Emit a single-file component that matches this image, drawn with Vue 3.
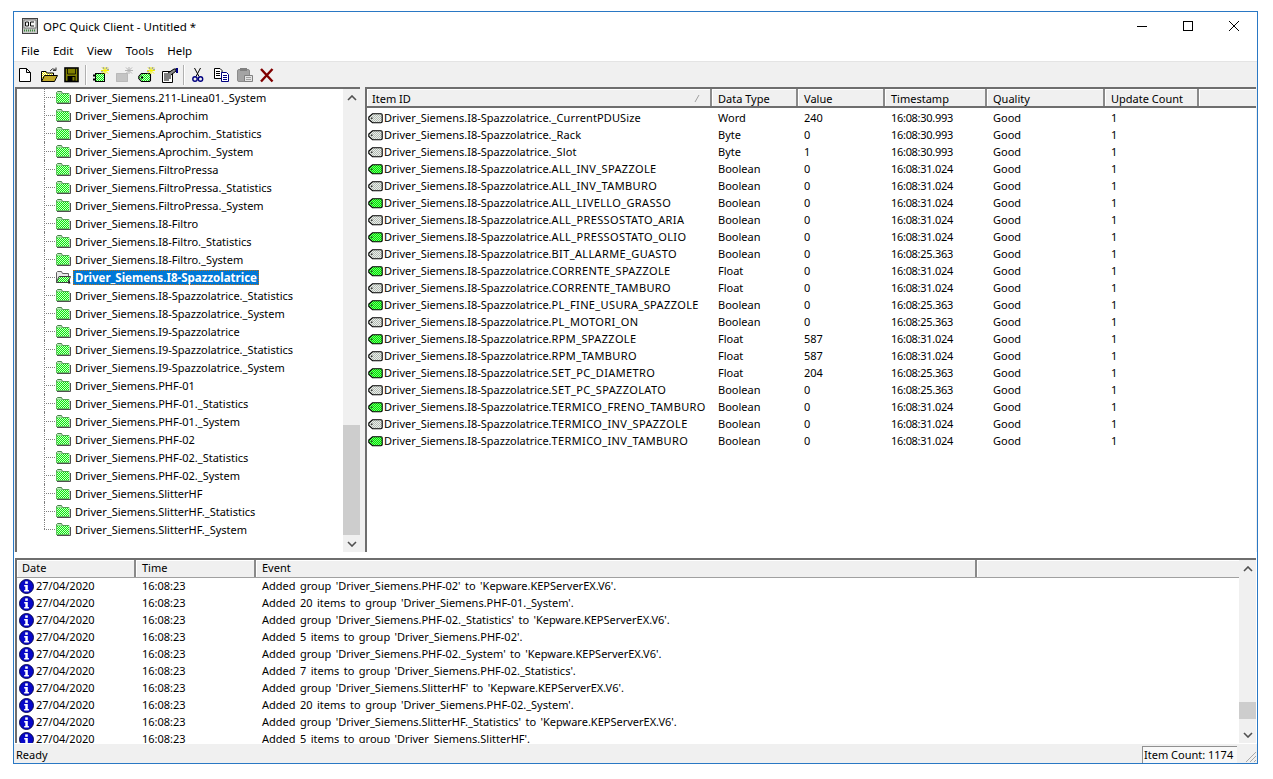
<template>
  <div class="page">
    <svg class="defs" width="0" height="0">
      <defs>
        <pattern id="dith" width="2" height="2" patternUnits="userSpaceOnUse">
          <rect width="2" height="2" fill="#10e810" />
          <rect width="1" height="1" fill="#c8ffc8" />
          <rect x="1" y="1" width="1" height="1" fill="#c8ffc8" />
        </pattern>
        <pattern id="dithtag" width="2" height="2" patternUnits="userSpaceOnUse">
          <rect width="2" height="2" fill="#00e800" />
          <rect width="1" height="1" fill="#70f870" />
          <rect x="1" y="1" width="1" height="1" fill="#70f870" />
        </pattern>
        <pattern id="dithgray" width="2" height="2" patternUnits="userSpaceOnUse">
          <rect width="2" height="2" fill="#b0bcb0" />
          <rect width="1" height="1" fill="#ececec" />
          <rect x="1" y="1" width="1" height="1" fill="#ececec" />
        </pattern>
        <pattern id="dithyellow" width="2" height="2" patternUnits="userSpaceOnUse">
          <rect width="2" height="2" fill="#e8e000" />
          <rect width="1" height="1" fill="#fff" />
          <rect x="1" y="1" width="1" height="1" fill="#fff" />
        </pattern>
        <symbol id="folder" viewBox="0 0 16 16">
          <path d="M1.5 6 V3.5 L2.5 2.5 H6.5 L7.5 4.5 H14" fill="#b8f0b8" stroke="#4a804a" />
          <rect x="1" y="4.5" width="13.5" height="9.5" fill="#60c060" />
          <rect x="2" y="5" width="12" height="8" fill="url(#dith)" />
          <path d="M15.5 6 V14.5 H2" fill="none" stroke="#505050" />
        </symbol>
        <symbol id="folderopen" viewBox="0 0 16 16">
          <path d="M1.5 13.5 V3.5 L2.5 2.5 H6.5 L7.5 4.5 H13.5 V7" fill="#e8e8e8" stroke="#606060" />
          <path d="M1.5 13.5 L4 7.5 H15.5 L13 13.5 Z" fill="url(#dith)" stroke="#404040" />
          <path d="M14 10 L15.5 14.5 H13 Z" fill="#111" />
        </symbol>
        <symbol id="tag" viewBox="0 0 15 11">
          <path d="M4.5 0.8 H13 Q14.2 0.8 14.2 2 V8.5 Q14.2 9.7 13 9.7 H4.5 L0.8 6.5 V4 Z" fill="url(#dithtag)" stroke="#000" stroke-width="1.1" />
          <rect x="3" y="4.5" width="1.5" height="1.5" fill="#305030" />
        </symbol>
        <symbol id="taggray" viewBox="0 0 15 11">
          <path d="M4.5 0.8 H13 Q14.2 0.8 14.2 2 V8.5 Q14.2 9.7 13 9.7 H4.5 L0.8 6.5 V4 Z" fill="url(#dithgray)" stroke="#000" stroke-width="1.1" />
          <rect x="3" y="4.5" width="1.5" height="1.5" fill="#404040" />
        </symbol>
        <symbol id="info" viewBox="0 0 15 15">
          <circle cx="7.5" cy="7.5" r="7" fill="#0808c8" stroke="#000048" stroke-width="0.9" />
          <rect x="6.2" y="2.4" width="2.6" height="2.4" fill="#fff" />
          <path d="M5.2 6 H8.8 V11 H9.9 V12.6 H5.2 V11 H6.3 V7.6 H5.2 Z" fill="#fff" />
        </symbol>
        <symbol id="spark" viewBox="0 0 18 16">
          <path d="M11 0 V7 M7 3.5 H15 M8 0.5 L14 6.5 M14 0.5 L8 6.5" stroke="#f4f400" />
          <path d="M9 0 L10 2 M13 0 L12 2 M15 2 L13 3 M7 5 L9 4" stroke="#909090" />
        </symbol>
        <symbol id="sparkoff" viewBox="0 0 18 16">
          <path d="M11 0 V7 M7 3.5 H15 M8 0.5 L14 6.5 M14 0.5 L8 6.5" stroke="#b4b4b4" />
        </symbol>
      </defs>
    </svg>

    <div class="window">
      <div class="titlebar">
        <svg class="appicon" viewBox="0 0 16 16" width="16" height="16">
          <rect x="0.5" y="0.5" width="15" height="15" fill="#c8c8c8" stroke="#404040" />
          <rect x="2" y="2" width="12" height="8" fill="#f4f4f4" stroke="#303030" stroke-width="0.6" />
          <path d="M3.5 4 H6.5 V8 H3.5 Z M12 4 H8.5 V8 H12" fill="none" stroke="#111" />
          <path d="M2 12.5 H14" stroke="#3a8a3a" stroke-width="2" stroke-dasharray="1 1" />
        </svg>
        <span class="title">OPC Quick Client - Untitled *</span>
        <div class="wincontrols">
          <svg width="10" height="10" viewBox="0 0 10 10"><path d="M0 5.5 H10" stroke="#000" /></svg>
          <svg width="10" height="10" viewBox="0 0 10 10"><rect x="0.5" y="0.5" width="9" height="9" fill="none" stroke="#000" /></svg>
          <svg width="10" height="10" viewBox="0 0 10 10"><path d="M0 0 L10 10 M10 0 L0 10" stroke="#000" /></svg>
        </div>
      </div>

      <div class="menubar">
        <span v-for="m in menus" :key="m">{{ m }}</span>
      </div>

      <div class="toolbar">
        <!-- new -->
        <svg class="tb" viewBox="0 0 16 16"><path d="M1.5 1.5 H8.5 L12.5 5.5 V14.5 H1.5 Z M8.5 1.5 V5.5 H12.5" fill="#fff" stroke="#000" /></svg>
        <!-- open -->
        <svg class="tb" viewBox="0 0 16 16"><path d="M0.5 14.5 V4.5 H5 L6 6 H12.5 V8" fill="url(#dithyellow)" stroke="#000" /><path d="M0.5 14.5 L3.5 8.5 H16.5 L13.5 14.5 Z" fill="#c0a828" stroke="#000" /><path d="M9 4 Q11 0.5 14.5 2.5 M15 0.5 V3.5 H12" fill="none" stroke="#303030" /></svg>
        <!-- save -->
        <svg class="tb" viewBox="0 0 16 16"><rect x="1" y="1" width="13" height="13.5" fill="#808000" stroke="#000" stroke-width="1.6" /><path d="M3.5 1.5 V7 H11.5 V1.5" fill="none" stroke="#000" stroke-width="0.8" /><rect x="3.5" y="9" width="8" height="5.5" fill="#000" /><rect x="8.5" y="10" width="2" height="3.5" fill="#808000" /></svg>
        <span class="sep"></span>
        <!-- new server / group / item -->
        <svg class="tb" viewBox="0 0 16 16"><rect x="3.5" y="6.5" width="9" height="8" fill="url(#dith)" stroke="#000" /><path d="M1 8.5 H3 M1 12.5 H3" stroke="#000" stroke-width="2" /><svg x="2" y="0" width="18" height="16"><use href="#spark" /></svg></svg>
        <svg class="tb" viewBox="0 0 16 16"><rect x="1.5" y="6.5" width="11" height="8" fill="#c4c4c4" stroke="#989898" stroke-dasharray="1 1" /><svg x="3" y="0" width="18" height="16"><use href="#sparkoff" /></svg></svg>
        <svg class="tb" viewBox="0 0 16 16"><path d="M3.5 6.5 H11.5 L12.5 7.5 V13.5 L11.5 14.5 H3.5 L0.8 11.5 V9.5 Z" fill="url(#dith)" stroke="#000" stroke-width="1.1" /><rect x="3" y="9.5" width="2" height="2" fill="#000" /><svg x="2" y="0" width="18" height="16"><use href="#spark" /></svg></svg>
        <svg class="tb" viewBox="0 0 16 16"><path d="M1.5 4.5 H11.5 V15.5 H1.5 Z" fill="#fff" stroke="#000" /><path d="M3 7 H10 M3 9 H10 M3 11 H10 M3 13 H8" stroke="#000" /><path d="M7 6 L13 2 H15 V4 L10 8" fill="#888" stroke="#000" /><rect x="15" y="1" width="2" height="5" fill="#000080" /></svg>
        <span class="sep sep2"></span>
        <!-- cut -->
        <svg class="tb" viewBox="0 0 16 16"><path d="M3.5 1 L8 9.5 M9.5 1 L5 9.5" stroke="#000" fill="none" /><circle cx="4" cy="12" r="2.2" fill="none" stroke="#000080" stroke-width="1.4" /><circle cx="9.5" cy="12" r="2.2" fill="none" stroke="#000080" stroke-width="1.4" /></svg>
        <!-- copy -->
        <svg class="tb" viewBox="0 0 16 16"><path d="M0.5 1.5 H6 L8 3.5 V11.5 H0.5 Z" fill="#fff" stroke="#000" /><path d="M2 4.5 H6 M2 6.5 H6 M2 8.5 H6" stroke="#000" /><path d="M7.5 5.5 H12.5 L14.5 7.5 V14.5 H7.5 Z" fill="#fff" stroke="#000080" /><path d="M9 8.5 H13 M9 10.5 H13 M9 12.5 H13" stroke="#000080" /></svg>
        <!-- paste, disabled -->
        <svg class="tb" viewBox="0 0 16 16"><rect x="0.5" y="2.5" width="12" height="12" rx="1.5" fill="#a4a4a4" stroke="#8c8c8c" /><rect x="3" y="1" width="7" height="3" fill="#808080" /><path d="M7.5 8.5 H15.5 V14.5 H7.5 Z" fill="#e4e4e4" stroke="#808080" /><path d="M9 10.5 H14 M9 12.5 H14" stroke="#a0a0a0" /></svg>
        <!-- delete -->
        <svg class="tb" viewBox="0 0 16 16"><path d="M1 2 L12.5 14.5 M12.5 2 L1 14.5" stroke="#800000" stroke-width="2.4" fill="none" /></svg>
      </div>

      <div class="upper">
        <div class="tree sunken">
          <div class="treerows">
            <div v-for="(g, i) in groups" :key="g" class="treerow">
              <span class="dots" :class="{ last: i === groups.length - 1 }"></span>
              <svg class="foldericon"><use :href="g === selectedGroup ? '#folderopen' : '#folder'" /></svg>
              <span class="treelabel" :class="{ sel: g === selectedGroup }">{{ g }}</span>
            </div>
          </div>
          <div class="vscroll">
            <svg class="chev" viewBox="0 0 10 6"><path d="M1 5 L5 1 L9 5" fill="none" stroke="#505050" stroke-width="1.6" /></svg>
            <div class="track treetrack"><div class="thumb"></div></div>
            <svg class="chev" viewBox="0 0 10 6"><path d="M1 1 L5 5 L9 1" fill="none" stroke="#505050" stroke-width="1.6" /></svg>
          </div>
        </div>

        <div class="items sunken">
          <div class="hdr">
            <div v-for="c in itemCols" :key="c.label" class="hcell" :style="{ width: c.w + 'px' }">
              {{ c.label }}
              <svg v-if="c.sort" class="sortmark" width="6" height="7" viewBox="0 0 6 7"><path d="M5 0 L1 7" stroke="#a0a0a0" /></svg>
            </div>
            <div class="hcell fill"></div>
          </div>
          <div v-for="r in itemRows" :key="r.id" class="irow">
            <div class="cell idcell" :style="{ width: itemCols[0].w + 'px' }">
              <svg class="tagicon"><use :href="r.on ? '#tag' : '#taggray'" /></svg>
              <span>{{ prefix }}<span class="suffix" :class="{ sys: r.id.startsWith('_') }">{{ r.id }}</span></span>
            </div>
            <div class="cell" :style="{ width: itemCols[1].w + 'px' }">{{ r.type }}</div>
            <div class="cell" :style="{ width: itemCols[2].w + 'px' }">{{ r.value }}</div>
            <div class="cell stamp" :style="{ width: itemCols[3].w + 'px' }">{{ r.time }}</div>
            <div class="cell" :style="{ width: itemCols[4].w + 'px' }">Good</div>
            <div class="cell" :style="{ width: itemCols[5].w + 'px' }">1</div>
          </div>
        </div>
      </div>

      <div class="log sunken">
        <div class="logmain">
          <div class="hdr">
            <div v-for="c in logCols" :key="c.label" class="hcell" :style="{ width: c.w + 'px' }">{{ c.label }}</div>
            <div class="hcell fill"></div>
          </div>
          <div class="logrows">
            <div v-for="(e, i) in events" :key="i" class="lrow">
              <div class="cell datecell" :style="{ width: logCols[0].w + 'px' }">
                <svg class="infoicon"><use href="#info" /></svg>
                <span>27/04/2020</span>
              </div>
              <div class="cell" :style="{ width: logCols[1].w + 'px' }">16:08:23</div>
              <div class="cell event">{{ e }}</div>
            </div>
          </div>
        </div>
        <div class="vscroll">
          <svg class="chev" viewBox="0 0 10 6"><path d="M1 5 L5 1 L9 5" fill="none" stroke="#505050" stroke-width="1.6" /></svg>
          <div class="track logtrack"><div class="thumb"></div></div>
          <svg class="chev" viewBox="0 0 10 6"><path d="M1 1 L5 5 L9 1" fill="none" stroke="#505050" stroke-width="1.6" /></svg>
        </div>
      </div>

      <div class="statusbar">
        <span class="ready">Ready</span>
        <span class="count">Item Count: 1174</span>
        <svg class="grip" width="13" height="13" viewBox="0 0 13 13"><path d="M12 2 L2 12 M12 6 L6 12 M12 10 L10 12" stroke="#a8a8a8" fill="none" /></svg>
      </div>
    </div>
  </div>
</template>

<script setup>
const menus = ['File', 'Edit', 'View', 'Tools', 'Help']
const selectedGroup = 'Driver_Siemens.I8-Spazzolatrice'

const groups = [
  'Driver_Siemens.211-Linea01._System',
  'Driver_Siemens.Aprochim',
  'Driver_Siemens.Aprochim._Statistics',
  'Driver_Siemens.Aprochim._System',
  'Driver_Siemens.FiltroPressa',
  'Driver_Siemens.FiltroPressa._Statistics',
  'Driver_Siemens.FiltroPressa._System',
  'Driver_Siemens.I8-Filtro',
  'Driver_Siemens.I8-Filtro._Statistics',
  'Driver_Siemens.I8-Filtro._System',
  'Driver_Siemens.I8-Spazzolatrice',
  'Driver_Siemens.I8-Spazzolatrice._Statistics',
  'Driver_Siemens.I8-Spazzolatrice._System',
  'Driver_Siemens.I9-Spazzolatrice',
  'Driver_Siemens.I9-Spazzolatrice._Statistics',
  'Driver_Siemens.I9-Spazzolatrice._System',
  'Driver_Siemens.PHF-01',
  'Driver_Siemens.PHF-01._Statistics',
  'Driver_Siemens.PHF-01._System',
  'Driver_Siemens.PHF-02',
  'Driver_Siemens.PHF-02._Statistics',
  'Driver_Siemens.PHF-02._System',
  'Driver_Siemens.SlitterHF',
  'Driver_Siemens.SlitterHF._Statistics',
  'Driver_Siemens.SlitterHF._System',
]

const itemCols = [
  { label: 'Item ID', w: 345, sort: true },
  { label: 'Data Type', w: 86 },
  { label: 'Value', w: 87 },
  { label: 'Timestamp', w: 102 },
  { label: 'Quality', w: 118 },
  { label: 'Update Count', w: 94 },
]

const prefix = 'Driver_Siemens.I8-Spazzolatrice.'
const itemRows = [
  { id: '_CurrentPDUSize', type: 'Word', value: '240', time: '16:08:30.993', on: false },
  { id: '_Rack', type: 'Byte', value: '0', time: '16:08:30.993', on: false },
  { id: '_Slot', type: 'Byte', value: '1', time: '16:08:30.993', on: false },
  { id: 'ALL_INV_SPAZZOLE', type: 'Boolean', value: '0', time: '16:08:31.024', on: true },
  { id: 'ALL_INV_TAMBURO', type: 'Boolean', value: '0', time: '16:08:31.024', on: false },
  { id: 'ALL_LIVELLO_GRASSO', type: 'Boolean', value: '0', time: '16:08:31.024', on: true },
  { id: 'ALL_PRESSOSTATO_ARIA', type: 'Boolean', value: '0', time: '16:08:31.024', on: false },
  { id: 'ALL_PRESSOSTATO_OLIO', type: 'Boolean', value: '0', time: '16:08:31.024', on: true },
  { id: 'BIT_ALLARME_GUASTO', type: 'Boolean', value: '0', time: '16:08:25.363', on: false },
  { id: 'CORRENTE_SPAZZOLE', type: 'Float', value: '0', time: '16:08:31.024', on: true },
  { id: 'CORRENTE_TAMBURO', type: 'Float', value: '0', time: '16:08:31.024', on: false },
  { id: 'PL_FINE_USURA_SPAZZOLE', type: 'Boolean', value: '0', time: '16:08:25.363', on: true },
  { id: 'PL_MOTORI_ON', type: 'Boolean', value: '0', time: '16:08:25.363', on: false },
  { id: 'RPM_SPAZZOLE', type: 'Float', value: '587', time: '16:08:31.024', on: true },
  { id: 'RPM_TAMBURO', type: 'Float', value: '587', time: '16:08:31.024', on: false },
  { id: 'SET_PC_DIAMETRO', type: 'Float', value: '204', time: '16:08:25.363', on: true },
  { id: 'SET_PC_SPAZZOLATO', type: 'Boolean', value: '0', time: '16:08:25.363', on: false },
  { id: 'TERMICO_FRENO_TAMBURO', type: 'Boolean', value: '0', time: '16:08:31.024', on: true },
  { id: 'TERMICO_INV_SPAZZOLE', type: 'Boolean', value: '0', time: '16:08:31.024', on: false },
  { id: 'TERMICO_INV_TAMBURO', type: 'Boolean', value: '0', time: '16:08:31.024', on: true },
]

const logCols = [
  { label: 'Date', w: 119 },
  { label: 'Time', w: 120 },
  { label: 'Event', w: 721 },
]

const events = [
  "Added group 'Driver_Siemens.PHF-02' to 'Kepware.KEPServerEX.V6'.",
  "Added 20 items to group 'Driver_Siemens.PHF-01._System'.",
  "Added group 'Driver_Siemens.PHF-02._Statistics' to 'Kepware.KEPServerEX.V6'.",
  "Added 5 items to group 'Driver_Siemens.PHF-02'.",
  "Added group 'Driver_Siemens.PHF-02._System' to 'Kepware.KEPServerEX.V6'.",
  "Added 7 items to group 'Driver_Siemens.PHF-02._Statistics'.",
  "Added group 'Driver_Siemens.SlitterHF' to 'Kepware.KEPServerEX.V6'.",
  "Added 20 items to group 'Driver_Siemens.PHF-02._System'.",
  "Added group 'Driver_Siemens.SlitterHF._Statistics' to 'Kepware.KEPServerEX.V6'.",
  "Added 5 items to group 'Driver_Siemens.SlitterHF'.",
]
</script>

<style>
html, body { margin: 0; background: #fff; }
</style>

<style scoped>
.page {
  width: 1273px;
  height: 779px;
  padding: 11px 15px 15px 13px;
  box-sizing: border-box;
  font-family: "Noto Sans", "Liberation Sans", sans-serif;
  font-size: 11px;
  color: #000;
  overflow: hidden;
  background: #fff;
}
.defs { position: absolute; }
.window {
  height: 753px;
  border: 1px solid #2a78c4;
  box-sizing: border-box;
  display: flex;
  flex-direction: column;
  background: #fff;
}
.titlebar {
  height: 28px;
  flex: none;
  display: flex;
  align-items: center;
  padding-left: 8px;
}
.appicon { margin-right: 5px; flex: none; }
.title { font-size: 11.5px; }
.wincontrols {
  margin-left: auto;
  display: flex;
  gap: 36px;
  padding-right: 18px;
}
.menubar {
  height: 21px;
  flex: none;
  box-sizing: border-box;
  display: flex;
  align-items: center;
  gap: 13.5px;
  padding-left: 7px;
  font-size: 11.5px;
}
.toolbar {
  height: 26px;
  flex: none;
  background: #f0f0f0;
  border-top: 1px solid #e4e4e4;
  box-sizing: border-box;
  display: flex;
  align-items: center;
  padding-left: 4px;
}
.tb { width: 16px; height: 16px; flex: none; margin-right: 7px; overflow: visible; }
.sep {
  width: 1px;
  height: 20px;
  background: #b0b0b0;
  border-right: 1px solid #fff;
  margin: 0 5px 0 -2px;
}
.sep2 { margin: 0 6px 0 -1px; }
.upper {
  height: 465px;
  flex: none;
  display: flex;
  background: #f0f0f0;
  gap: 5px;
  padding: 0 1px;
}
.sunken {
  border-top: 2px solid #6e6e6e;
  border-left: 2px solid #6e6e6e;
  box-sizing: border-box;
  background: #fff;
}
.tree {
  width: 345px;
  flex: none;
  display: flex;
}
.treerows { flex: 1; overflow: hidden; }
.treerow {
  height: 18px;
  display: flex;
  align-items: center;
  position: relative;
  padding-left: 27px;
  top: -1px;
}
.dots {
  width: 11px;
  border-top: 1px dotted #808080;
  flex: none;
}
.dots::before {
  content: '';
  position: absolute;
  left: 27px;
  top: 0;
  height: 18px;
  border-left: 1px dotted #808080;
}
.dots.last::before { height: 9px; }
.foldericon { width: 16px; height: 16px; flex: none; margin-right: 2px; }
.treelabel { padding: 0 2px; line-height: 15px; white-space: nowrap; }
.treelabel.sel {
  background: #0078d7;
  color: #fff;
  font-weight: 700;
  font-size: 11.5px;
  outline: 1px dotted #c07010;
  outline-offset: -1px;
}
.vscroll {
  width: 17px;
  flex: none;
  background: #f0f0f0;
  display: flex;
  flex-direction: column;
  align-items: center;
}
.chev { width: 10px; height: 6px; margin: 5.5px 0; flex: none; }
.track { flex: 1; width: 100%; display: flex; flex-direction: column; justify-content: flex-end; }
.treetrack .thumb { height: 110px; }
.logtrack { padding-bottom: 7px; box-sizing: border-box; }
.logtrack .thumb { height: 17px; }
.thumb { background: #cdcdcd; }
.items {
  flex: 1;
  min-width: 0;
  overflow: hidden;
}
.hdr {
  height: 17px;
  display: flex;
  border-bottom: 2px solid #6e6e6e;
  box-sizing: content-box;
  background: #f0f0f0;
}
.items .hdr { margin-bottom: 2px; }
.hcell {
  flex: none;
  box-sizing: border-box;
  padding-left: 6px;
  border-right: 2px solid #8a8a8a;
  line-height: 20px;
  position: relative;
  white-space: nowrap;
  box-shadow: inset 1px 1px 0 #fff;
}
.hcell:first-child { padding-left: 5px; }
.hcell.fill { flex: 1; border-right: 0; }
.sortmark { position: absolute; right: 10px; top: 6px; }
.irow, .lrow {
  height: 17px;
  display: flex;
  align-items: flex-start;
}
.cell {
  flex: none;
  padding-left: 6px;
  box-sizing: border-box;
  white-space: nowrap;
  line-height: 15px;
}
.stamp { letter-spacing: -0.3px; }
.event { word-spacing: 1.6px; }
.idcell { padding-left: 1px; display: flex; align-items: flex-start; }
.tagicon { width: 15px; height: 11px; flex: none; margin: 3px 1px 0 0; }
.suffix { letter-spacing: 0.37px; }
.suffix.sys { letter-spacing: 0.12px; }
.log {
  height: 185px;
  flex: none;
  display: flex;
  margin: 6px 1px 0;
}
.log .hdr { border-bottom: 1px solid #a0a0a0; }
.log .hcell { line-height: 15px; }
.logmain { flex: 1; min-width: 0; overflow: hidden; }
.logrows { height: 165px; overflow: hidden; }
.datecell { padding-left: 2px; display: flex; align-items: flex-start; }
.infoicon { width: 15px; height: 15px; flex: none; margin: 1px 2px 0 0; }
.statusbar {
  flex: 1;
  background: #f0f0f0;
  display: flex;
  align-items: center;
  padding-left: 2px;
  position: relative;
  border-top: 1px solid #fff;
}
.ready { padding-top: 2px; }
.count {
  margin-left: auto;
  margin-right: 20px;
  width: 95px;
  height: 17px;
  box-sizing: border-box;
  padding-left: 1px;
  line-height: 15px;
  white-space: nowrap;
  border-left: 1px solid #909090;
  border-top: 1px solid #909090;
  background: #f8f8f8;
  align-self: flex-end;
}
.grip { position: absolute; right: 0; bottom: 0; }
</style>
